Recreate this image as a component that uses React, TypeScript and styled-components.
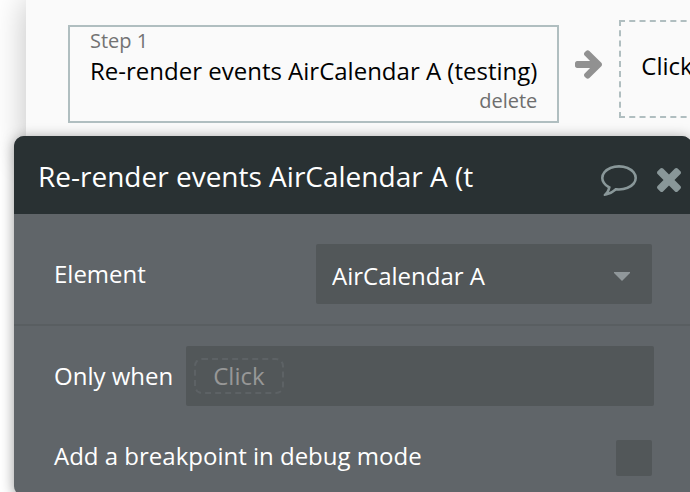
import React from "react";
import styled, { createGlobalStyle } from "styled-components";

const GlobalStyle = createGlobalStyle`
  *, *::before, *::after { box-sizing: border-box; }
  body { margin: 0; background: #ffffff; }
  body, button, input, select {
    font-family: "Open Sans", "Noto Sans", sans-serif;
  }
`;

const Page = styled.div`
  height: 100vh;
  overflow: hidden;
`;

const Workflow = styled.main`
  display: flex;
  align-items: flex-start;
  margin-left: 26px;
  padding: 20px 0 32px 42px;
  background: #fafafa;
  box-shadow: 0 0 32px rgba(0, 0, 0, 0.25);
  overflow: hidden;
`;

const StepCard = styled.article`
  flex: none;
  display: flex;
  flex-direction: column;
  height: 98px;
  margin-top: 5px;
  padding: 0 20px;
  border: 2px solid #b0bec0;
`;

const StepNumber = styled.span`
  font-size: 20px;
  line-height: 28px;
  color: #737373;
`;

const StepTitle = styled.span`
  font-size: 24px;
  line-height: 32px;
  color: #000000;
  white-space: nowrap;
`;

const DeleteButton = styled.button`
  align-self: flex-end;
  padding: 0;
  border: 0;
  background: none;
  font-size: 20px;
  line-height: 28px;
  color: #6e6e6e;
  cursor: pointer;
`;

const StepArrow = styled.svg`
  flex: none;
  width: 27px;
  height: 29px;
  margin: 30px 17px 0 16px;
  fill: #919191;
`;

const AddStep = styled.button`
  flex: none;
  min-width: 160px;
  height: 98px;
  padding: 0 20px 6px;
  border: 2px dashed #b0bec0;
  background: none;
  font-size: 24px;
  line-height: 32px;
  text-align: left;
  color: #000000;
  white-space: nowrap;
  cursor: pointer;
`;

const Editor = styled.section`
  position: relative;
  margin: -19px -2px 0 14px;
  border-radius: 10px;
  background: #606569;
  box-shadow: 0 2px 14px rgba(0, 0, 0, 0.4);
  overflow: hidden;
`;

const EditorHeader = styled.header`
  display: flex;
  align-items: center;
  height: 78px;
  padding: 0 11px 0 24px;
  background: #293133;
`;

const TitleInput = styled.input`
  flex: 1;
  min-width: 0;
  padding: 2px 0 0;
  border: 0;
  outline: 0;
  background: none;
  font-size: 28px;
  line-height: 40px;
  color: #ffffff;
`;

const IconButton = styled.button`
  display: flex;
  padding: 10px 0 0;
  margin-left: 20px;
  border: 0;
  background: none;
  color: #899799;
  cursor: pointer;
`;

const Icon = styled.svg<{ $width: number; $height: number }>`
  width: ${(p) => p.$width}px;
  height: ${(p) => p.$height}px;
  fill: currentColor;
`;

const Fields = styled.div`
  display: flex;
  flex-direction: column;
  padding: 20px 38px 20px 40px;
`;

const ElementFields = styled(Fields)`
  padding: 30px 40px 20px;
  border-bottom: 2px solid #595e61;
`;

const Row = styled.div`
  display: flex;
  align-items: center;
  justify-content: space-between;
`;

const BreakpointRow = styled(Row)`
  align-items: flex-start;
  margin: 34px 2px 0 0;
`;

const Label = styled.label`
  flex: none;
  font-size: 24px;
  line-height: 32px;
  color: #ffffff;
`;

const SelectWrap = styled.div`
  display: grid;
  flex: 0 1 336px;
  align-items: center;
  border-radius: 2px;
  background: #525759;

  > * { grid-area: 1 / 1; }
`;

const Select = styled.select`
  appearance: none;
  width: 100%;
  height: 60px;
  padding: 2px 48px 0 16px;
  border: 0;
  border-radius: 2px;
  background: none;
  font-size: 24px;
  color: #ffffff;
`;

const Caret = styled.svg`
  justify-self: end;
  width: 16px;
  height: 9px;
  margin: 4px 22px 0 0;
  fill: #90979a;
  pointer-events: none;
`;

const Condition = styled.div`
  display: flex;
  flex: 1;
  align-items: center;
  height: 60px;
  margin-left: 13px;
  padding: 0 8px;
  border-radius: 2px;
  background: #525759;
`;

const ConditionChip = styled.button`
  height: 36px;
  padding: 0 17px;
  border: 2px dashed #5d6265;
  border-radius: 8px;
  background: none;
  font-size: 24px;
  line-height: 32px;
  color: #979797;
  cursor: pointer;
`;

const Checkbox = styled.input`
  appearance: none;
  width: 36px;
  height: 36px;
  margin: 0;
  border-radius: 2px;
  background: #525759;

  &:checked { background: #899799; }
`;

export default function App() {
  return (
    <>
      <GlobalStyle />
      <Page>
        <Workflow>
          <StepCard>
            <StepNumber>Step 1</StepNumber>
            <StepTitle>Re-render events AirCalendar A (testing)</StepTitle>
            <DeleteButton type="button">delete</DeleteButton>
          </StepCard>
          <StepArrow viewBox="128 181 1472 1558" aria-hidden="true">
            <path d="M1600 960q0 54-37 91l-651 651q-39 37-91 37-51 0-90-37l-75-75q-38-38-38-91t38-91l293-293h-704q-52 0-84.500-37.500t-32.500-90.500v-128q0-53 32.500-90.500t84.500-37.500h704l-293-294q-38-36-38-90t38-90l75-75q38-38 90-38 53 0 91 38l651 651q37 35 37 90z" />
          </StepArrow>
          <AddStep type="button">Click</AddStep>
        </Workflow>

        <Editor aria-label="Action properties">
          <EditorHeader>
            <TitleInput aria-label="Action name" defaultValue="Re-render events AirCalendar A (t" />
            <IconButton type="button" aria-label="Comment">
              <Icon $width={36} $height={31} viewBox="0 256 1792 1536" aria-hidden="true">
                <path d="M896 384q-204 0-381.500 69.500t-282 187.500-104.500 255q0 112 71.500 213.500t201.500 175.500l87 50-27 96q-24 91-70 172 152-63 275-171l43-38 57 6q69 8 130 8 204 0 381.500-69.500t282-187.500 104.500-255-104.500-255-282-187.500-381.500-69.500zm896 512q0 174-120 321.500t-326 233-450 85.500q-70 0-145-8-198 175-460 242-49 14-114 22h-5q-15 0-27-10.500t-16-27.500v-1q-3-4-.5-12t2-10 4.500-9.500l6-9 7-8.500 8-9q7-8 31-34.500t34.500-38 31-39.500 32.500-51 27-59 26-76q-157-89-247.500-220t-90.500-281q0-174 120-321.500t326-233 450-85.500 450 85.500 326 233 120 321.500z" />
              </Icon>
            </IconButton>
            <IconButton type="button" aria-label="Close">
              <Icon $width={24} $height={24} viewBox="302 366 1188 1188" aria-hidden="true">
                <path d="M1490 1322q0 40-28 68l-136 136q-28 28-68 28t-68-28l-294-294-294 294q-28 28-68 28t-68-28l-136-136q-28-28-28-68t28-68l294-294-294-294q-28-28-28-68t28-68l136-136q28-28 68-28t68 28l294 294 294-294q28-28 68-28t68 28l136 136q28 28 28 68t-28 68l-294 294 294 294q28 28 28 68z" />
              </Icon>
            </IconButton>
          </EditorHeader>

          <ElementFields>
            <Row>
              <Label htmlFor="element">Element</Label>
              <SelectWrap>
                <Select id="element" defaultValue="a">
                  <option value="a">AirCalendar A</option>
                </Select>
                <Caret viewBox="0 0 16 9" aria-hidden="true">
                  <path d="M0 0h16v1L8 9 0 1z" />
                </Caret>
              </SelectWrap>
            </Row>
          </ElementFields>

          <Fields>
            <Row>
              <Label htmlFor="condition">Only when</Label>
              <Condition>
                <ConditionChip id="condition" type="button">Click</ConditionChip>
              </Condition>
            </Row>
            <BreakpointRow>
              <Label htmlFor="breakpoint">Add a breakpoint in debug mode</Label>
              <Checkbox id="breakpoint" type="checkbox" />
            </BreakpointRow>
          </Fields>
        </Editor>
      </Page>
    </>
  );
}
